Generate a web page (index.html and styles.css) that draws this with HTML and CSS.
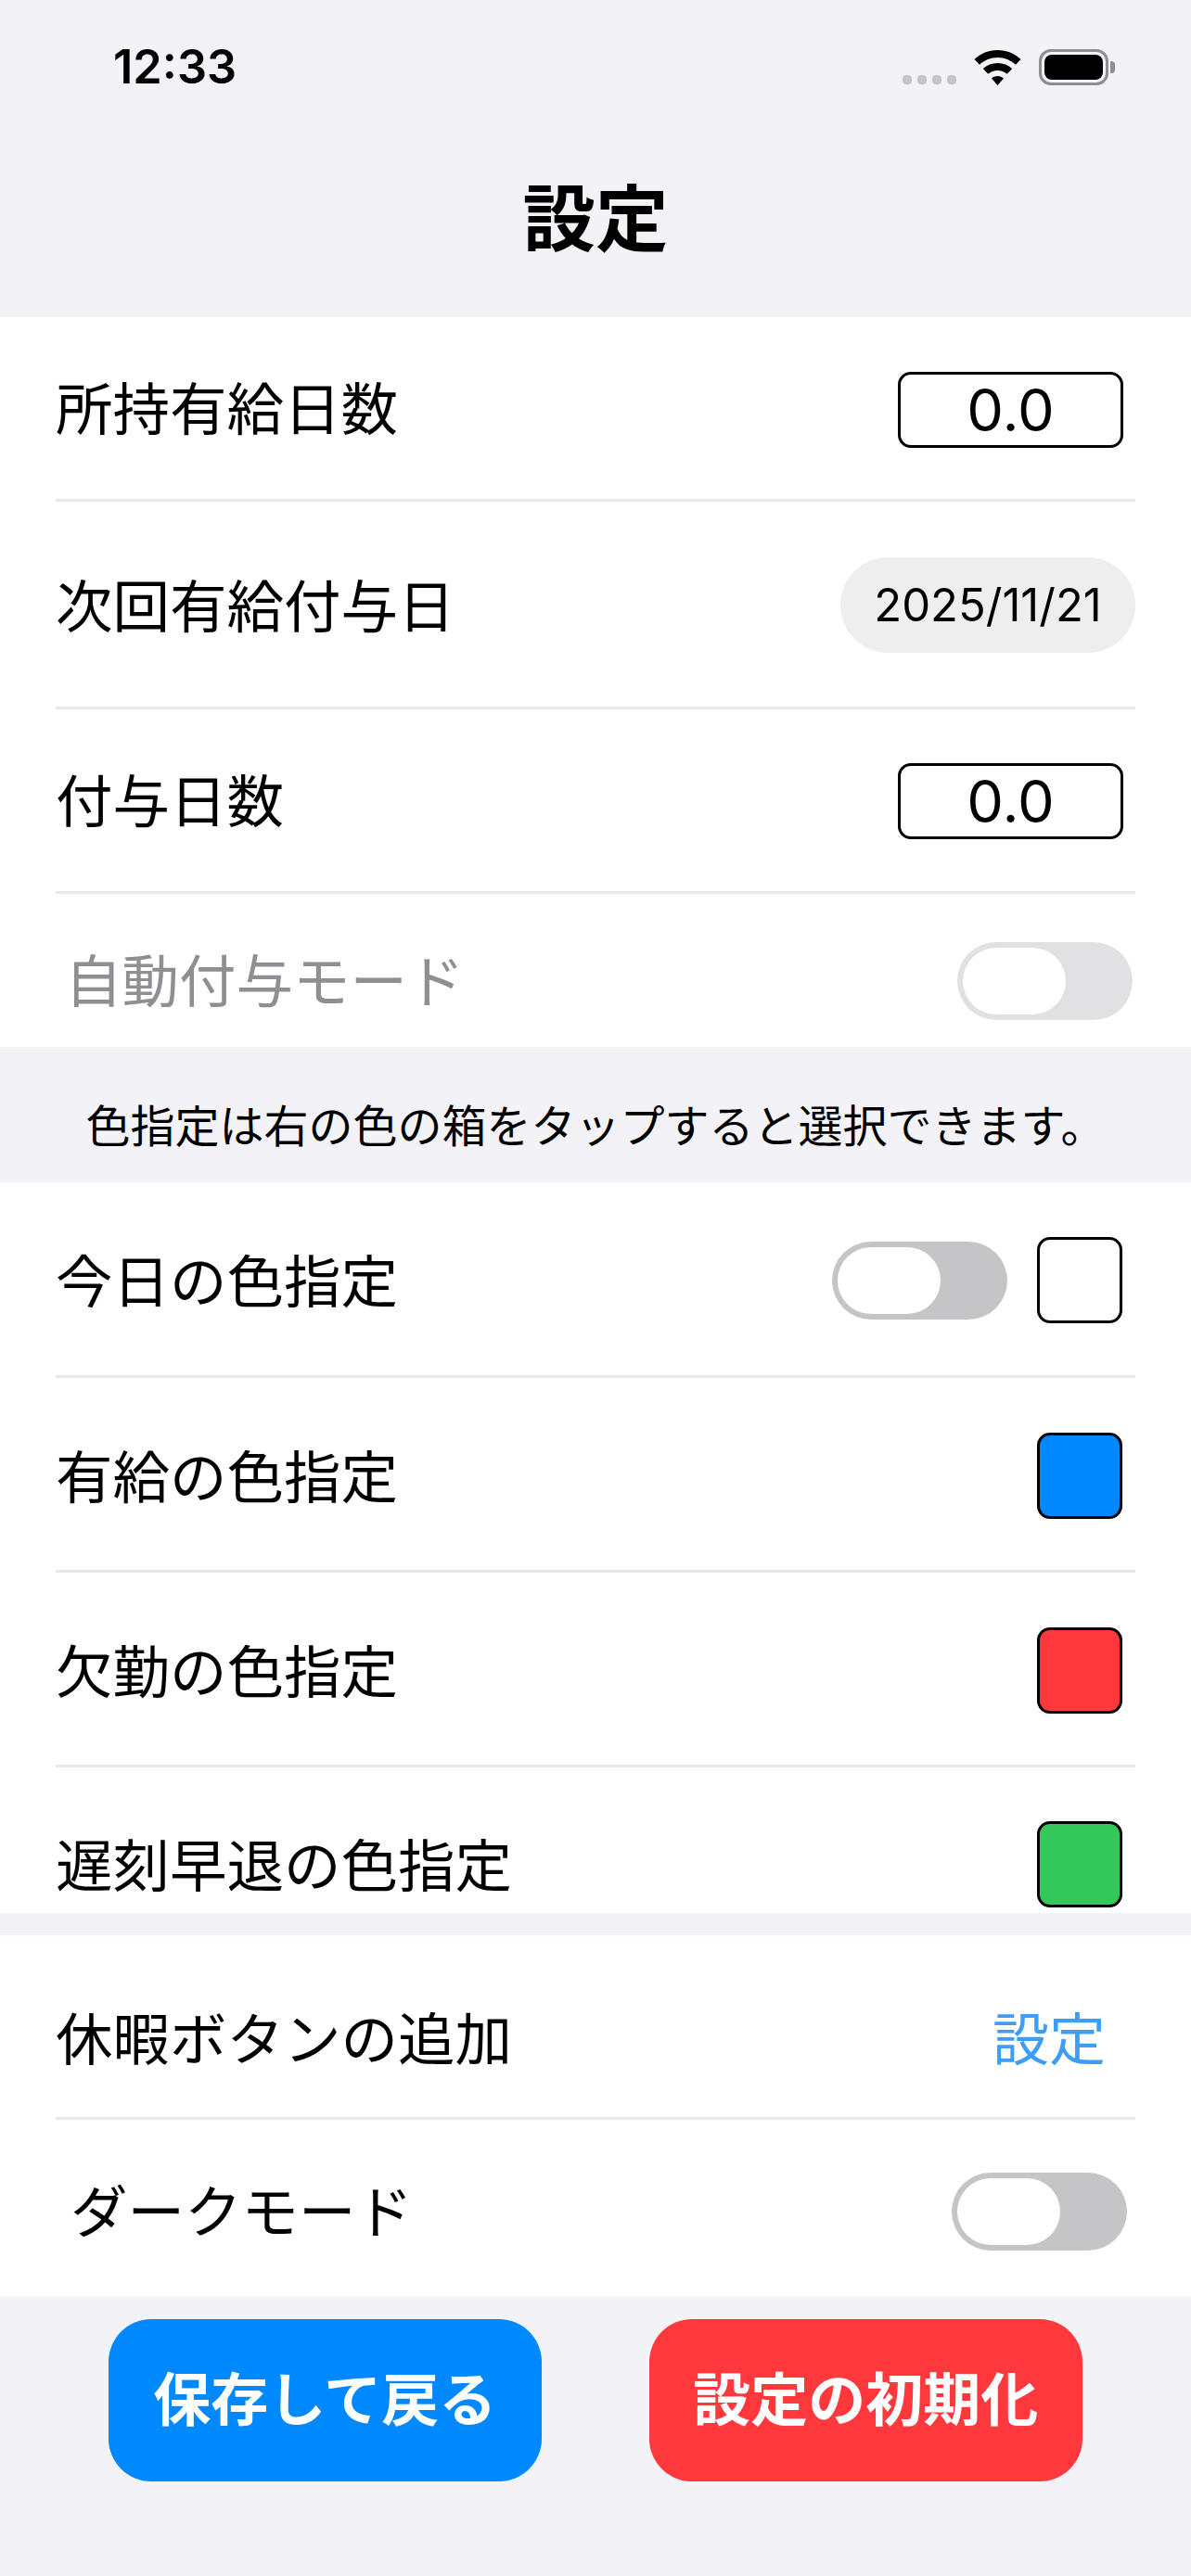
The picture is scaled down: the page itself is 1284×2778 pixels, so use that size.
FILE: index.html
```html
<!DOCTYPE html>
<html lang="ja">
<head>
<meta charset="utf-8">
<title>設定</title>
<link rel="stylesheet" href="styles.css">
</head>
<body>
<div class="screen">
  <div class="statusbar">
    <span class="clock">12:33</span>
    <div class="status-icons">
      <div class="signal"><i></i><i></i><i></i><i></i></div>
      <svg class="wifi" width="51" height="38" viewBox="0 0 51 38"><path d="M25.500 0C35 0 43.700 3.700 50.500 9.900L45 15.700C39.800 11 33 8 25.500 8S11.200 11 6 15.700L.5 9.900C7.300 3.700 16 0 25.500 0ZM25.500 14C31.500 14 37 16.300 41.200 20L35.700 25.800C33 23.400 29.400 22 25.500 22S18 23.400 15.300 25.800L9.800 20C14 16.300 19.500 14 25.500 14ZM25.500 28C28 28 30.300 29 32 30.500L25.500 38L19 30.500C20.700 29 23 28 25.500 28Z"/></svg>
      <div class="battery"><div class="battery-body"><div class="battery-fill"></div></div><div class="battery-cap"></div></div>
    </div>
  </div>
  <h1 class="title">設定</h1>

  <section class="group group-a">
    <div class="row row-a1"><span class="label">所持有給日数</span><div class="field">0.0</div></div>
    <div class="row row-a2"><span class="label">次回有給付与日</span><div class="date">2025/11/21</div></div>
    <div class="row row-a3"><span class="label">付与日数</span><div class="field">0.0</div></div>
    <div class="row row-a4"><span class="label label-muted">自動付与モード</span><div class="toggle toggle-muted"><div class="knob"></div></div></div>
  </section>

  <p class="note">色指定は右の色の箱をタップすると選択できます。</p>

  <section class="group group-b">
    <div class="row row-b1"><span class="label">今日の色指定</span><div class="controls"><div class="toggle"><div class="knob"></div></div><div class="swatch swatch-white"></div></div></div>
    <div class="row row-b"><span class="label">有給の色指定</span><div class="swatch swatch-blue"></div></div>
    <div class="row row-b"><span class="label">欠勤の色指定</span><div class="swatch swatch-red"></div></div>
    <div class="row row-clip"><span class="label">遅刻早退の色指定</span><div class="swatch swatch-green"></div></div>
  </section>

  <section class="group group-c">
    <div class="row row-c1"><span class="label">休暇ボタンの追加</span><span class="link">設定</span></div>
    <div class="row row-c2"><span class="label">ダークモード</span><div class="toggle"><div class="knob"></div></div></div>
  </section>

  <div class="actions">
    <button class="btn btn-blue">保存して戻る</button>
    <button class="btn btn-red">設定の初期化</button>
  </div>
</div>
</body>
</html>
```

FILE: styles.css
```css
* { box-sizing: border-box; }
html, body { margin: 0; padding: 0; }
body { font-family: "Noto Sans CJK JP", "Liberation Sans", sans-serif; color: #000; }
.screen { width: 1284px; height: 2778px; background: #f2f2f7; overflow: hidden; display: flex; flex-direction: column; }

.statusbar { height: 130px; flex: none; display: flex; justify-content: space-between; padding: 46px 82px 0 122px; }
.clock { font-family: "Inter", "Liberation Sans", sans-serif; font-weight: 600; font-size: 50.5px; line-height: 52px; }
.status-icons { display: flex; align-items: flex-start; }
.signal { display: flex; gap: 6px; margin: 35px 19px 0 0; }
.signal i { width: 10px; height: 10px; border-radius: 4px; background: #c4c4c9; }
.wifi { margin: 8px 19px 0 0; }
.battery { display: flex; align-items: center; height: 39px; margin-top: 7px; }
.battery-body { width: 75px; height: 39px; border: 3px solid #8e8e92; border-radius: 13px; padding: 3px; }
.battery-fill { width: 100%; height: 100%; background: #000; border-radius: 8px; }
.battery-cap { width: 5px; height: 13px; background: #8e8e92; border-radius: 0 4px 4px 0; margin-left: 2px; }

.title { margin: 0; height: 212px; flex: none; font-size: 78.5px; font-weight: 700; line-height: 1; text-align: center; padding-top: 62px; }

.group { background: #fff; padding: 0 60px; flex: none; overflow: hidden; }
.group-a { height: 787px; }
.group-b { height: 788px; }
.group-c { height: 390px; margin-top: 24px; }

.row { display: flex; align-items: center; justify-content: space-between; border-bottom: 3px solid #e8e8ea; }
.row-a1 { height: 199px; padding: 3px 13px 0 0; }
.row-a1 .label { margin-bottom: 7px; }
.row-a2 { height: 224px; padding-top: 2px; }
.row-a2 .label { margin-bottom: 4px; }
.row-a3 { height: 199px; padding: 2px 13px 0 0; }
.row-a3 .label { margin-bottom: 7px; }
.row-a4 { height: 165px; border-bottom: 0; padding: 23px 3px 0 10px; }
.row-a4 .label { margin-bottom: 6px; }
.row-b1 { height: 211px; padding: 3px 14px 0 0; }
.row-b1 .label { margin-bottom: 3px; }
.row-b { height: 210px; padding: 3px 14px 0 0; }
.row-b .label { margin-bottom: 3px; }
.row-clip { height: 157px; border-bottom: 0; align-items: flex-start; padding: 58px 14px 0 0; }
.row-clip .label { margin-top: 5px; }
.row-c1 { height: 199px; padding: 22px 32px 0 0; }
.row-c2 { height: 191px; border-bottom: 0; padding: 7px 9px 0 16px; }
.row-c2 .label { margin-bottom: 6px; }

.label { font-size: 61.5px; line-height: 80px; white-space: nowrap; }
.label-muted { color: #8e8e93; }
.link { font-size: 61px; line-height: 80px; color: #3e9ef5; }

.field { width: 243px; height: 82px; border: 3px solid #000; border-radius: 14px; font-family: "Inter", "Liberation Sans", sans-serif; font-size: 63px; font-weight: 400; line-height: 76px; text-align: center; }
.date { width: 318px; height: 103px; border-radius: 52px; background: #eeeeef; font-family: "Inter", "Liberation Sans", sans-serif; font-size: 49px; line-height: 103px; text-align: center; }

.controls { display: flex; align-items: center; gap: 32px; }
.toggle { width: 189px; height: 84px; border-radius: 42px; background: #c5c5c7; padding: 6px; flex: none; }
.toggle-muted { background: #e1e1e3; }
.knob { width: 111px; height: 72px; border-radius: 36px; background: #fff; }
.swatch { width: 92px; height: 93px; border: 3px solid #000; border-radius: 14px; flex: none; }
.swatch-white { background: #fff; }
.swatch-blue { background: #0088ff; }
.swatch-red { background: #ff383c; }
.swatch-green { background: #34c759; }

.note { margin: 0; height: 146px; flex: none; font-size: 48px; line-height: 128px; padding-top: 18px; text-align: center; }

.actions { display: flex; gap: 116.500px; padding: 24px 0 0 117px; }
.btn { width: 466.500px; height: 175px; border: 0; border-radius: 46px; color: #fff; font-family: inherit; font-size: 62px; font-weight: 700; padding: 0 0 10px; }
.btn-blue { background: #0088ff; }
.btn-red { background: #ff383c; }
```
